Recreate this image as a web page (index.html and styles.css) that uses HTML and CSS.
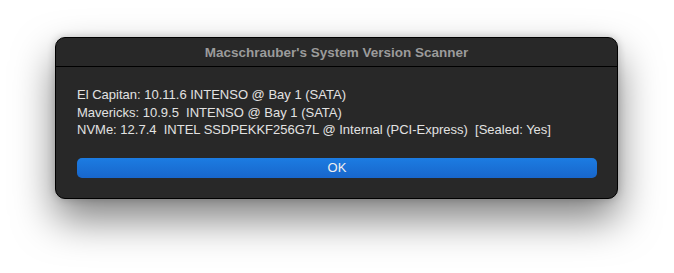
FILE: index.html
```html
<!DOCTYPE html>
<html>
<head>
<meta charset="utf-8">
<link rel="stylesheet" href="styles.css">
</head>
<body>
<div class="window">
  <div class="titlebar">Macschrauber's System Version Scanner</div>
  <div class="content">
    <div class="lines">
      <div>El Capitan: 10.11.6 INTENSO @ Bay 1 (SATA)</div>
      <div>Mavericks: 10.9.5&nbsp; INTENSO @ Bay 1 (SATA)</div>
      <div>NVMe: 12.7.4&nbsp; INTEL SSDPEKKF256G7L @ Internal (PCI-Express)&nbsp; [Sealed: Yes]</div>
    </div>
    <button class="ok">OK</button>
  </div>
</div>
</body>
</html>
```
FILE: styles.css
```css
html, body {
  margin: 0;
  padding: 0;
  background: #ffffff;
}
body {
  width: 674px;
  height: 273px;
  overflow: hidden;
  font-family: "Liberation Sans", Arial, sans-serif;
}
.window {
  margin: 37px 0 0 55px;
  width: 561px;
  height: 160px;
  background: #282828;
  border: 1px solid #000;
  border-radius: 10px;
  box-shadow: 0 20px 40px rgba(0,0,0,0.5), 0 0 8px rgba(0,0,0,0.2);
  display: flex;
  flex-direction: column;
}
.titlebar {
  height: 28px;
  border-bottom: 1px solid #000;
  display: flex;
  align-items: center;
  justify-content: center;
  font-weight: bold;
  font-size: 13.5px;
  color: #9b9b9b;
}
.content {
  flex: 1;
  padding: 19px 21px 0 21px;
  display: flex;
  flex-direction: column;
}
.lines {
  font-size: 13px;
  line-height: 17.5px;
  color: #e2e2e2;
}
.ok {
  margin-top: 19px;
  height: 20px;
  width: 520px;
  border: none;
  border-radius: 5px;
  background: linear-gradient(#1c7ce2, #1866cb);
  color: #f0f0f0;
  font-family: "Liberation Sans", Arial, sans-serif;
  font-size: 13px;
  padding: 0;
}
```
